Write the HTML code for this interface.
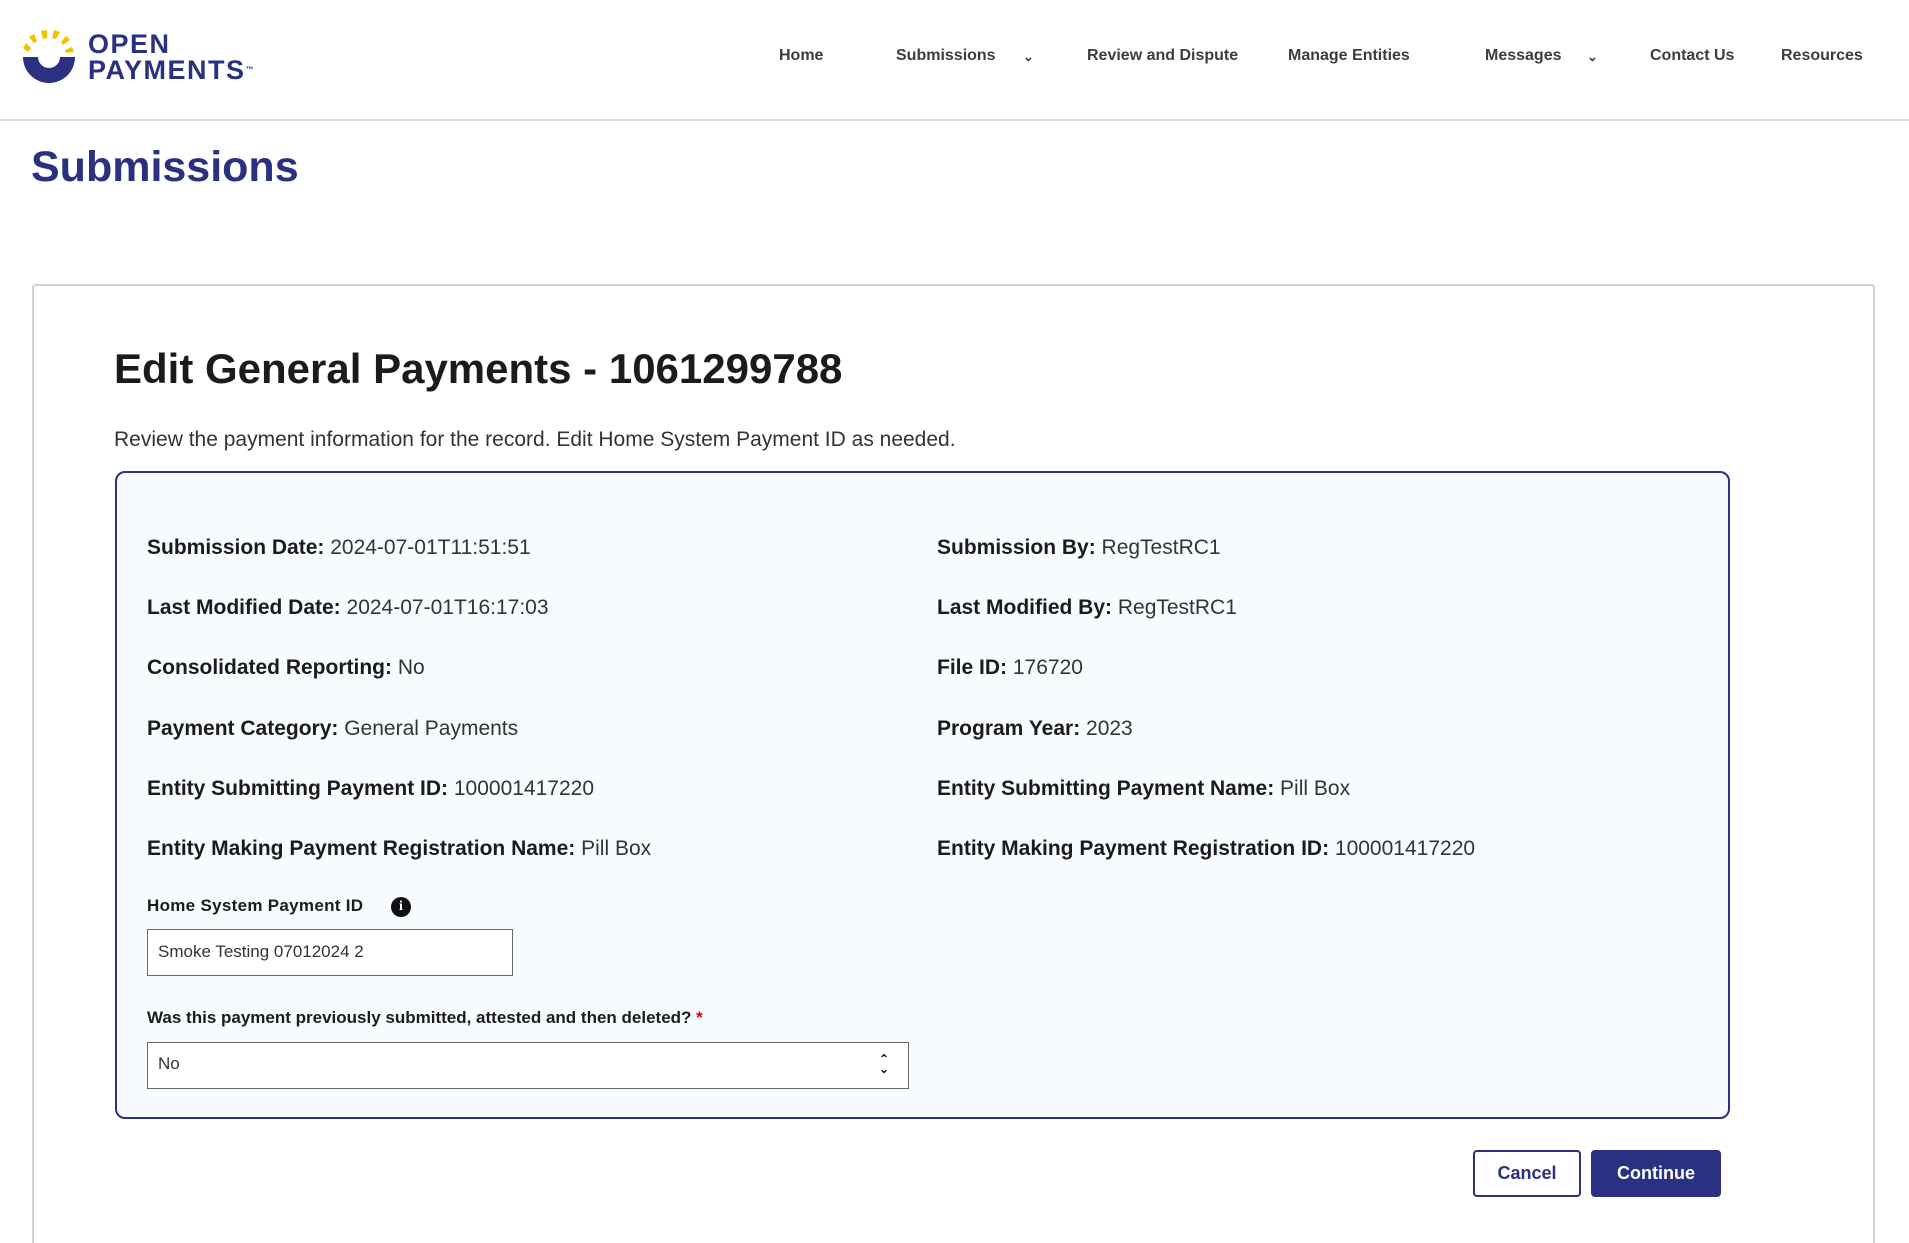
<!DOCTYPE html>
<html style="width:1909px;height:1243px;overflow:hidden"><head><meta charset="utf-8"><style>
*{margin:0;padding:0;box-sizing:border-box}
body{width:1909px;height:1243px;background:#fff;font-family:"Liberation Sans",sans-serif;color:#1b1b1b;position:relative;overflow:hidden}
.a{position:absolute;white-space:nowrap}
.nav{font-size:16px;font-weight:bold;color:#3d3d3d;top:47px}
.row{font-size:21px;color:#333}
.row b{color:#1b1b1b}
</style></head><body>
<svg class="a" style="left:22px;top:28px" width="62" height="62" viewBox="0 0 62 62">
<g fill="#f5c000">
<path d="M6 24 L1 20 L4 15 L9 20Z"/><path d="M12 15 L7 9 L12 6 L15 13Z"/><path d="M21 11 L19 3 L25 2 L25 10Z"/><path d="M30 10 L32 2 L38 4 L34 11Z"/><path d="M39 14 L44 8 L48 12 L41 17Z"/><path d="M43 22 L50 19 L52 24 L44 25Z"/>
</g>
<path d="M1 29 L16 29 A11 11 0 0 0 38 29 L53 29 A26 26 0 0 1 1 29Z" fill="#2a3180"/>
</svg>
<div class="a" style="left:88px;top:31px;font-size:27px;font-weight:bold;color:#2a3180;line-height:26px;letter-spacing:1.5px">OPEN<br>PAYMENTS<span style="font-size:8px;vertical-align:top">™</span></div>
<div class="a nav" style="left:779px">Home</div>
<div class="a nav" style="left:896px">Submissions</div>
<div class="a nav" style="left:1023px;font-size:13px;top:49px">⌄</div>
<div class="a nav" style="left:1087px">Review and Dispute</div>
<div class="a nav" style="left:1288px">Manage Entities</div>
<div class="a nav" style="left:1485px">Messages</div>
<div class="a nav" style="left:1587px;font-size:13px;top:49px">⌄</div>
<div class="a nav" style="left:1650px">Contact Us</div>
<div class="a nav" style="left:1781px">Resources</div>
<div class="a" style="left:0;top:119px;width:1909px;height:2px;background:#ddd"></div>
<div class="a" style="left:31px;top:143px;font-size:43px;font-weight:bold;color:#2a3180">Submissions</div>
<div class="a" style="left:32px;top:284px;width:1843px;height:959px;border:2px solid #d0d0d0;border-bottom:none;border-radius:4px 4px 0 0"></div>
<div class="a" style="left:114px;top:345px;font-size:42px;font-weight:bold;color:#1b1b1b">Edit General Payments - 1061299788</div>
<div class="a" style="left:114px;top:428px;font-size:21px;color:#333">Review the payment information for the record. Edit Home System Payment ID as needed.</div>
<div class="a" style="left:115px;top:471px;width:1615px;height:648px;border:2px solid #2a3180;border-radius:10px;background:#f7fbff"></div>
<div class="a row" style="left:147px;top:536px"><b>Submission Date:</b> 2024-07-01T11:51:51</div>
<div class="a row" style="left:147px;top:596px"><b>Last Modified Date:</b> 2024-07-01T16:17:03</div>
<div class="a row" style="left:147px;top:656px"><b>Consolidated Reporting:</b> No</div>
<div class="a row" style="left:147px;top:717px"><b>Payment Category:</b> General Payments</div>
<div class="a row" style="left:147px;top:777px"><b>Entity Submitting Payment ID:</b> 100001417220</div>
<div class="a row" style="left:147px;top:837px"><b>Entity Making Payment Registration Name:</b> Pill Box</div>
<div class="a row" style="left:937px;top:536px"><b>Submission By:</b> RegTestRC1</div>
<div class="a row" style="left:937px;top:596px"><b>Last Modified By:</b> RegTestRC1</div>
<div class="a row" style="left:937px;top:656px"><b>File ID:</b> 176720</div>
<div class="a row" style="left:937px;top:717px"><b>Program Year:</b> 2023</div>
<div class="a row" style="left:937px;top:777px"><b>Entity Submitting Payment Name:</b> Pill Box</div>
<div class="a row" style="left:937px;top:837px"><b>Entity Making Payment Registration ID:</b> 100001417220</div>
<div class="a" style="left:147px;top:896px;font-size:17px;font-weight:bold;letter-spacing:0.3px">Home System Payment ID</div>
<div class="a" style="left:391px;top:897px;width:20px;height:20px;border-radius:50%;background:#111;color:#fff;font-size:14px;font-weight:bold;text-align:center;line-height:20px;font-family:'Liberation Serif',serif">i</div>
<div class="a" style="left:147px;top:929px;width:366px;height:47px;border:1px solid #666;background:#fff;font-size:17px;color:#333;padding:12px 10px">Smoke Testing 07012024 2</div>
<div class="a" style="left:147px;top:1008px;font-size:17px;font-weight:bold">Was this payment previously submitted, attested and then deleted? <span style="color:#d00">*</span></div>
<div class="a" style="left:147px;top:1042px;width:762px;height:47px;border:1px solid #666;background:#fff;font-size:17px;color:#333;padding:11px 10px">No</div>
<div class="a" style="left:879px;top:1054px;font-size:12px;line-height:10px;font-weight:bold">⌃<br>⌄</div>
<div class="a" style="left:1473px;top:1150px;width:108px;height:47px;border:2px solid #2a3180;border-radius:4px;background:#fff;color:#2a3180;font-size:18px;font-weight:bold;text-align:center;line-height:43px">Cancel</div>
<div class="a" style="left:1591px;top:1150px;width:130px;height:47px;border-radius:4px;background:#2a3180;color:#fff;font-size:18px;font-weight:bold;text-align:center;line-height:47px">Continue</div>
</body></html>
